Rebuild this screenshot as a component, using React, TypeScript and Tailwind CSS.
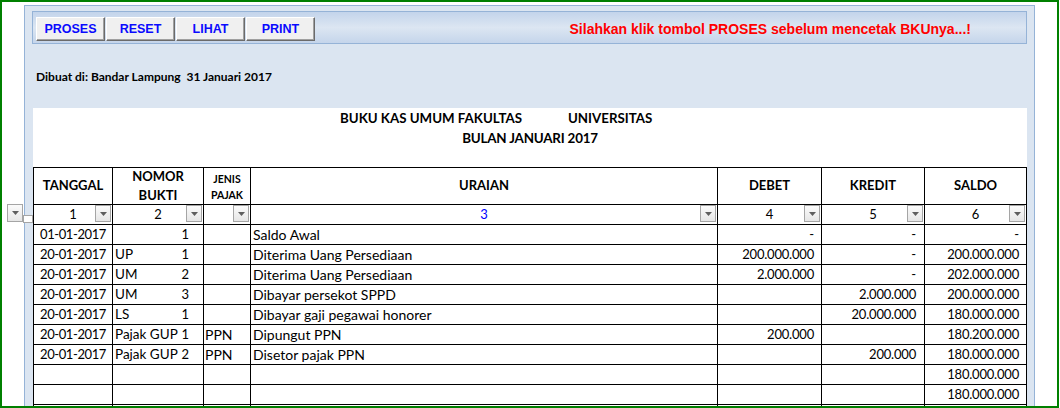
import React from "react";

type Row = {
  tanggal: string;
  kode: string;
  no: string;
  pajak: string;
  uraian: string;
  debet: string;
  kredit: string;
  saldo: string;
};

const rows: Row[] = [
  { tanggal: "01-01-2017", kode: "", no: "1", pajak: "", uraian: "Saldo Awal", debet: "-", kredit: "-", saldo: "-" },
  { tanggal: "20-01-2017", kode: "UP", no: "1", pajak: "", uraian: "Diterima Uang Persediaan", debet: "200.000.000", kredit: "-", saldo: "200.000.000" },
  { tanggal: "20-01-2017", kode: "UM", no: "2", pajak: "", uraian: "Diterima Uang Persediaan", debet: "2.000.000", kredit: "-", saldo: "202.000.000" },
  { tanggal: "20-01-2017", kode: "UM", no: "3", pajak: "", uraian: "Dibayar persekot SPPD", debet: "", kredit: "2.000.000", saldo: "200.000.000" },
  { tanggal: "20-01-2017", kode: "LS", no: "1", pajak: "", uraian: "Dibayar gaji pegawai honorer", debet: "", kredit: "20.000.000", saldo: "180.000.000" },
  { tanggal: "20-01-2017", kode: "Pajak GUP", no: "1", pajak: "PPN", uraian: "Dipungut PPN", debet: "200.000", kredit: "", saldo: "180.200.000" },
  { tanggal: "20-01-2017", kode: "Pajak GUP", no: "2", pajak: "PPN", uraian: "Disetor pajak PPN", debet: "", kredit: "200.000", saldo: "180.000.000" },
  { tanggal: "", kode: "", no: "", pajak: "", uraian: "", debet: "", kredit: "", saldo: "180.000.000" },
  { tanggal: "", kode: "", no: "", pajak: "", uraian: "", debet: "", kredit: "", saldo: "180.000.000" },
  { tanggal: "", kode: "", no: "", pajak: "", uraian: "", debet: "", kredit: "", saldo: "" },
];

const grid = "grid grid-cols-[79px_91px_47px_467px_104px_103px_102px]";
const cell = "border-r border-b border-black";
const num = "text-[13px] tracking-[-0.2px]";

// dropdown button of the autofilter
const FilterButton = ({ className = "" }: { className?: string }) => (
  <div
    className={
      "flex h-[17px] w-[16px] items-center justify-center border border-[#a5a5a5] bg-linear-to-b from-[#fbfbfb] to-[#e6e6e6] " +
      className
    }
  >
    <svg width="7" height="4" viewBox="0 0 7 4">
      <path d="M0 0h7L3.5 4z" fill="#5e5e5e" />
    </svg>
  </div>
);

const ToolButton = ({ label }: { label: string }) => (
  <button className="h-[24px] w-[69px] border border-t-white border-l-white border-r-[#6b6b6b] border-b-[#6b6b6b] bg-[#f0f0f0] pt-[1px] text-[12.5px] font-bold text-[#0a0aff] shadow-[inset_-1px_-1px_0_#a0a0a0]">
    {label}
  </button>
);

export default function App() {
  return (
    <div className="relative h-[408px] w-[1060px] overflow-hidden bg-white font-['Lato',sans-serif] text-black">
      <div className="h-[408px] w-[1059px] overflow-hidden border-2 border-[#008000]">
        <div className="ml-[22px] mt-[3px] h-[420px] w-[1011px] border border-[#95b3d7] bg-[#dbe5f1] pl-[7px] pt-[5px]">
          {/* toolbar */}
          <div className="flex h-[33px] w-[995px] border border-[#95b3d7] bg-linear-to-b from-[#c3d4eb] via-[#dce6f2] to-[#c5d5eb] pl-[3px] pt-[5px] font-['Liberation_Sans',sans-serif]">
            <div className="flex gap-[1px]">
              <ToolButton label="PROSES" />
              <ToolButton label="RESET" />
              <ToolButton label="LIHAT" />
              <ToolButton label="PRINT" />
            </div>
            <div className="ml-auto mr-[55px] text-[14px] font-bold leading-[25px] text-[#ff0000]">
              Silahkan klik tombol PROSES sebelum mencetak BKUnya...!
            </div>
          </div>

          <div className="mt-[23px] h-[20px] pl-[4px] text-[12px] font-bold leading-[20px]">
            Dibuat di: Bandar Lampung&nbsp; 31 Januari 2017
          </div>

          {/* sheet */}
          <div className="ml-[1px] mt-[21px] w-[994px] bg-white pb-[40px]">
            <div className="flex h-[20px] pl-[307px] text-[13.3px] font-bold leading-[20px]">
              <span className="w-[228px]">BUKU KAS UMUM FAKULTAS</span>
              <span>UNIVERSITAS</span>
            </div>
            <div className="h-[20px] text-center text-[13.4px] font-bold leading-[20px] tracking-[-0.2px]">
              BULAN JANUARI 2017
            </div>

            <div className="mt-[19px] border-l border-t border-black">
              {/* header */}
              <div className={grid + " h-[37px] grid-rows-[37px] text-[13px] font-bold"}>
                <div className={cell + " flex items-center justify-center"}>TANGGAL</div>
                <div className={cell + " flex flex-col items-center justify-center leading-[19px]"}>
                  <span>NOMOR</span>
                  <span>BUKTI</span>
                </div>
                <div className={cell + " flex flex-col items-center justify-center pt-[1px] text-[10.5px] leading-[16px]"}>
                  <span>JENIS</span>
                  <span>PAJAK</span>
                </div>
                <div className={cell + " flex items-center justify-center"}>URAIAN</div>
                <div className={cell + " flex items-center justify-center"}>DEBET</div>
                <div className={cell + " flex items-center justify-center"}>KREDIT</div>
                <div className={cell + " flex items-center justify-center"}>SALDO</div>
              </div>

              {/* filter row */}
              <div className={grid + " h-[20px] grid-rows-[20px] text-[13px] leading-[19px]"}>
                {["1", "2", "", "3", "4", "5", "6"].map((n, i) => (
                  <div key={i} className={cell + " relative text-center " + (i === 3 ? "text-[#0000ff]" : "")}>
                    {n}
                    <FilterButton className="absolute right-[1px] top-0" />
                  </div>
                ))}
              </div>

              {/* data rows */}
              {rows.map((r, i) => (
                <div key={i} className={grid + " h-[20px] grid-rows-[20px] text-[14px] leading-[19px]"}>
                  <div className={cell + " text-center tracking-[-0.4px] " + num}>{r.tanggal}</div>
                  <div className={cell + " flex justify-between pl-[2px] pr-[14px]"}>
                    <span className="text-[13.5px]">{r.kode}</span>
                    <span className="text-[13px]">{r.no}</span>
                  </div>
                  <div className={cell + " pl-[1px]"}>{r.pajak}</div>
                  <div className={cell + " pl-[2px]"}>{r.uraian}</div>
                  <div className={cell + " pr-[7px] text-right " + num}>{r.debet}</div>
                  <div className={cell + " pr-[8px] text-right " + num}>{r.kredit}</div>
                  <div className={cell + " pr-[7px] text-right " + num}>{r.saldo}</div>
                </div>
              ))}
            </div>
          </div>
        </div>
      </div>

      {/* filter controls sticking out of the sheet's left edge */}
      <FilterButton className="absolute left-[7px] top-[204px] h-[18px]" />
      <div className="absolute left-[23px] top-[215px] h-[8px] w-[10px] border border-[#a5a5a5] bg-white" />
    </div>
  );
}
